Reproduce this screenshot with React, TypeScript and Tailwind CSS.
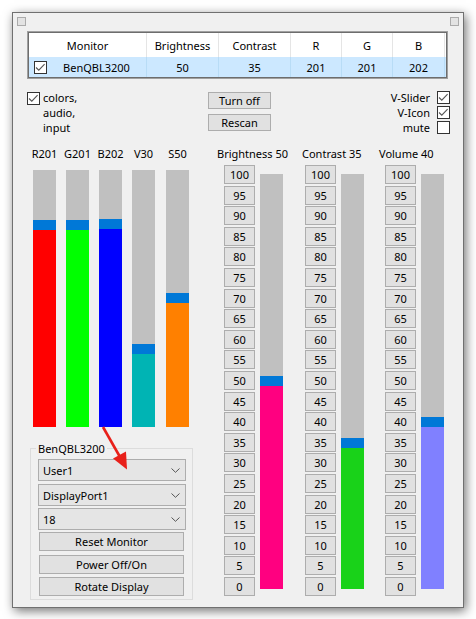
import React from "react";

function Check({ checked }: { checked: boolean }) {
  return (
    <div className="w-[13px] h-[13px] border border-[#333333] bg-white flex items-center justify-center shrink-0">
      {checked && (
        <svg width="11" height="11" viewBox="0 0 11 11">
          <path d="M1 5.5 L3.8 8.2 L9.6 2.2" fill="none" stroke="#555555" strokeWidth="1.1" />
        </svg>
      )}
    </div>
  );
}

function Chevron() {
  return (
    <svg width="9" height="5" viewBox="0 0 9 5">
      <path d="M0.5 0.5 L4.5 4.3 L8.5 0.5" fill="none" stroke="#555555" strokeWidth="1" />
    </svg>
  );
}

function Combo({ text, cls }: { text: string; cls: string }) {
  return (
    <div className={`h-[22px] w-[148px] bg-[#e5e5e5] border border-[#adadad] flex items-center justify-between pl-[4px] pr-[5px] ${cls}`}>
      <span>{text}</span>
      <Chevron />
    </div>
  );
}

function Btn({ text, cls }: { text: string; cls: string }) {
  return (
    <div className={`bg-[#e1e1e1] border border-[#adadad] flex items-center justify-center ${cls}`}>
      {text}
    </div>
  );
}

export default function App() {
  const left = [
    { label: "R201", gray: 50, color: "bg-[#ff0000]", ml: "" },
    { label: "G201", gray: 50, color: "bg-[#00ff00]", ml: "ml-[10px]" },
    { label: "B202", gray: 49, color: "bg-[#0000ff]", ml: "ml-[10px]" },
    { label: "V30", gray: 174, color: "bg-[#00b4b4]", ml: "ml-[10px]" },
    { label: "S50", gray: 123, color: "bg-[#ff8000]", ml: "ml-[11px]" },
  ];
  const steps = [100, 95, 90, 85, 80, 75, 70, 65, 60, 55, 50, 45, 40, 35, 30, 25, 20, 15, 10, 5, 0];
  const right = [
    { label: "Brightness 50", gray: 202, color: "bg-[#ff0080]", lml: "ml-[-7px]", gml: "" },
    { label: "Contrast 35", gray: 264, color: "bg-[#19d219]", lml: "ml-[-3px]", gml: "ml-[22px]" },
    { label: "Volume 40", gray: 243, color: "bg-[#8080ff]", lml: "ml-[-6px]", gml: "ml-[21px]" },
  ];
  const cols = [
    { label: "Monitor", w: "w-[118px]", val: "BenQBL3200" },
    { label: "Brightness", w: "w-[72px]", val: "50" },
    { label: "Contrast", w: "w-[72px]", val: "35" },
    { label: "R", w: "w-[51px]", val: "201" },
    { label: "G", w: "w-[51px]", val: "201" },
    { label: "B", w: "w-[52px]", val: "202" },
  ];

  return (
    <div className="relative w-[476px] h-[619px] bg-white font-['Noto_Sans',sans-serif] text-[11px] text-black leading-[15px] overflow-hidden">
      <div className="ml-[12px] mt-[12px] w-[452px] h-[596px] bg-[#f0f0f0] border border-[#707070] shadow-[2px_3px_10px_rgba(0,0,0,0.55)] flex flex-col">
        {/* top squares */}
        <div className="flex justify-between pt-[4px] pl-[4px] pr-[4px]">
          <div className="w-[9px] h-[9px] border border-[#ababab] bg-[#e3e3e3]" />
          <div className="w-[9px] h-[9px] border border-[#ababab] bg-[#e3e3e3]" />
        </div>

        {/* table */}
        <div className="mt-[5px] ml-[14px] w-[421px] h-[48px] border border-[#a0a0a0] bg-white">
          <div className="w-full h-full border border-[#6d6d6d] bg-white flex flex-col">
            <div className="flex h-[24px]">
              {cols.map((c) => (
                <div key={c.label} className={`${c.w} h-full border-r border-[#e5e5e5] flex items-center justify-center`}>
                  {c.label}
                </div>
              ))}
            </div>
            <div className="flex h-[20px] bg-[#cce8ff]">
              {cols.map((c, i) => (
                <div key={c.label} className={`${c.w} h-full border-r border-[#b8dcf6] flex items-center`}>
                  {i === 0 ? (
                    <>
                      <div className="ml-[5px]">
                        <Check checked />
                      </div>
                      <div className="flex-1 text-center">{c.val}</div>
                    </>
                  ) : (
                    <div className="flex-1 text-center">{c.val}</div>
                  )}
                </div>
              ))}
            </div>
          </div>
        </div>

        {/* controls row */}
        <div className="mt-[11px] h-[44px] flex items-start">
          <div className="ml-[14px] w-[181px] flex items-start gap-[3px]">
            <div className="mt-[2px]">
              <Check checked />
            </div>
            <div className="leading-[15px]">
              colors,
              <br />
              audio,
              <br />
              input
            </div>
          </div>
          <div className="mt-[2px] flex flex-col gap-[5px]">
            <Btn text="Turn off" cls="w-[63px] h-[17px]" />
            <Btn text="Rescan" cls="w-[63px] h-[17px]" />
          </div>
          <div className="ml-auto mr-[13px] flex flex-col">
            {[
              ["V-Slider", true],
              ["V-Icon", true],
              ["mute", false],
            ].map(([t, c]) => (
              <div key={t as string} className="h-[15px] flex items-start justify-end gap-[7px]">
                <span className="leading-[15px]">{t as string}</span>
                <div className="mt-[1px]">
                  <Check checked={c as boolean} />
                </div>
              </div>
            ))}
          </div>
        </div>

        {/* main */}
        <div className="pt-[12px] flex">
          {/* left section */}
          <div className="ml-[17px] w-[163px] flex flex-col">
            <div className="pl-[3px] flex">
              {left.map((b) => (
                <div key={b.label} className={`w-[23px] flex flex-col items-center ${b.ml}`}>
                  <div className="h-[15px] whitespace-nowrap">{b.label}</div>
                  <div className="mt-[9px] w-[23px] h-[257px] flex flex-col">
                    <div className="bg-[#c0c0c0] shrink-0" style={{ height: b.gray }} />
                    <div className="h-[10px] bg-[#0078d7] shrink-0" />
                    <div className={`flex-1 ${b.color}`} />
                  </div>
                </div>
              ))}
            </div>
            <fieldset className="mt-[14px] w-[163px] h-[159px] border border-[#dcdcdc] pl-[7px] pr-[6px] pt-[3px] pb-[3px] flex flex-col">
              <legend className="ml-[-2px] px-[2px] leading-[15px]">BenQBL3200</legend>
              <Combo text="User1" cls="" />
              <Combo text="DisplayPort1" cls="mt-[3px]" />
              <Combo text="18" cls="mt-[2px]" />
              <Btn text="Reset Monitor" cls="mt-[2px] ml-[1px] w-[145px] h-[19px]" />
              <Btn text="Power Off/On" cls="mt-[4px] ml-[1px] w-[145px] h-[19px]" />
              <Btn text="Rotate Display" cls="mt-[3px] ml-[1px] w-[145px] h-[19px]" />
            </fieldset>
          </div>

          {/* right section */}
          <div className="ml-[31px] flex">
            {right.map((g) => (
              <div key={g.label} className={`w-[59px] flex flex-col ${g.gml}`}>
                <div className={`h-[15px] whitespace-nowrap ${g.lml}`}>{g.label}</div>
                <div className="mt-[4px] flex">
                  <div className="w-[31px] h-[431px] flex flex-col justify-between">
                    {steps.map((s) => (
                      <Btn key={s} text={String(s)} cls="w-[31px] h-[19px]" />
                    ))}
                  </div>
                  <div className="ml-[5px] mt-[9px] w-[23px] h-[415px] flex flex-col">
                    <div className="bg-[#c0c0c0] shrink-0" style={{ height: g.gray }} />
                    <div className="h-[10px] bg-[#0078d7] shrink-0" />
                    <div className={`flex-1 ${g.color}`} />
                  </div>
                </div>
              </div>
            ))}
          </div>
        </div>
      </div>

      {/* red annotation arrow */}
      <svg className="absolute left-0 top-0 pointer-events-none" width="476" height="619" viewBox="0 0 476 619">
        <line x1="103" y1="427" x2="120" y2="457" stroke="#e8201a" strokeWidth="2.6" />
        <polygon points="127,469.5 113,458.5 126,451.5" fill="#e8201a" />
      </svg>
    </div>
  );
}
